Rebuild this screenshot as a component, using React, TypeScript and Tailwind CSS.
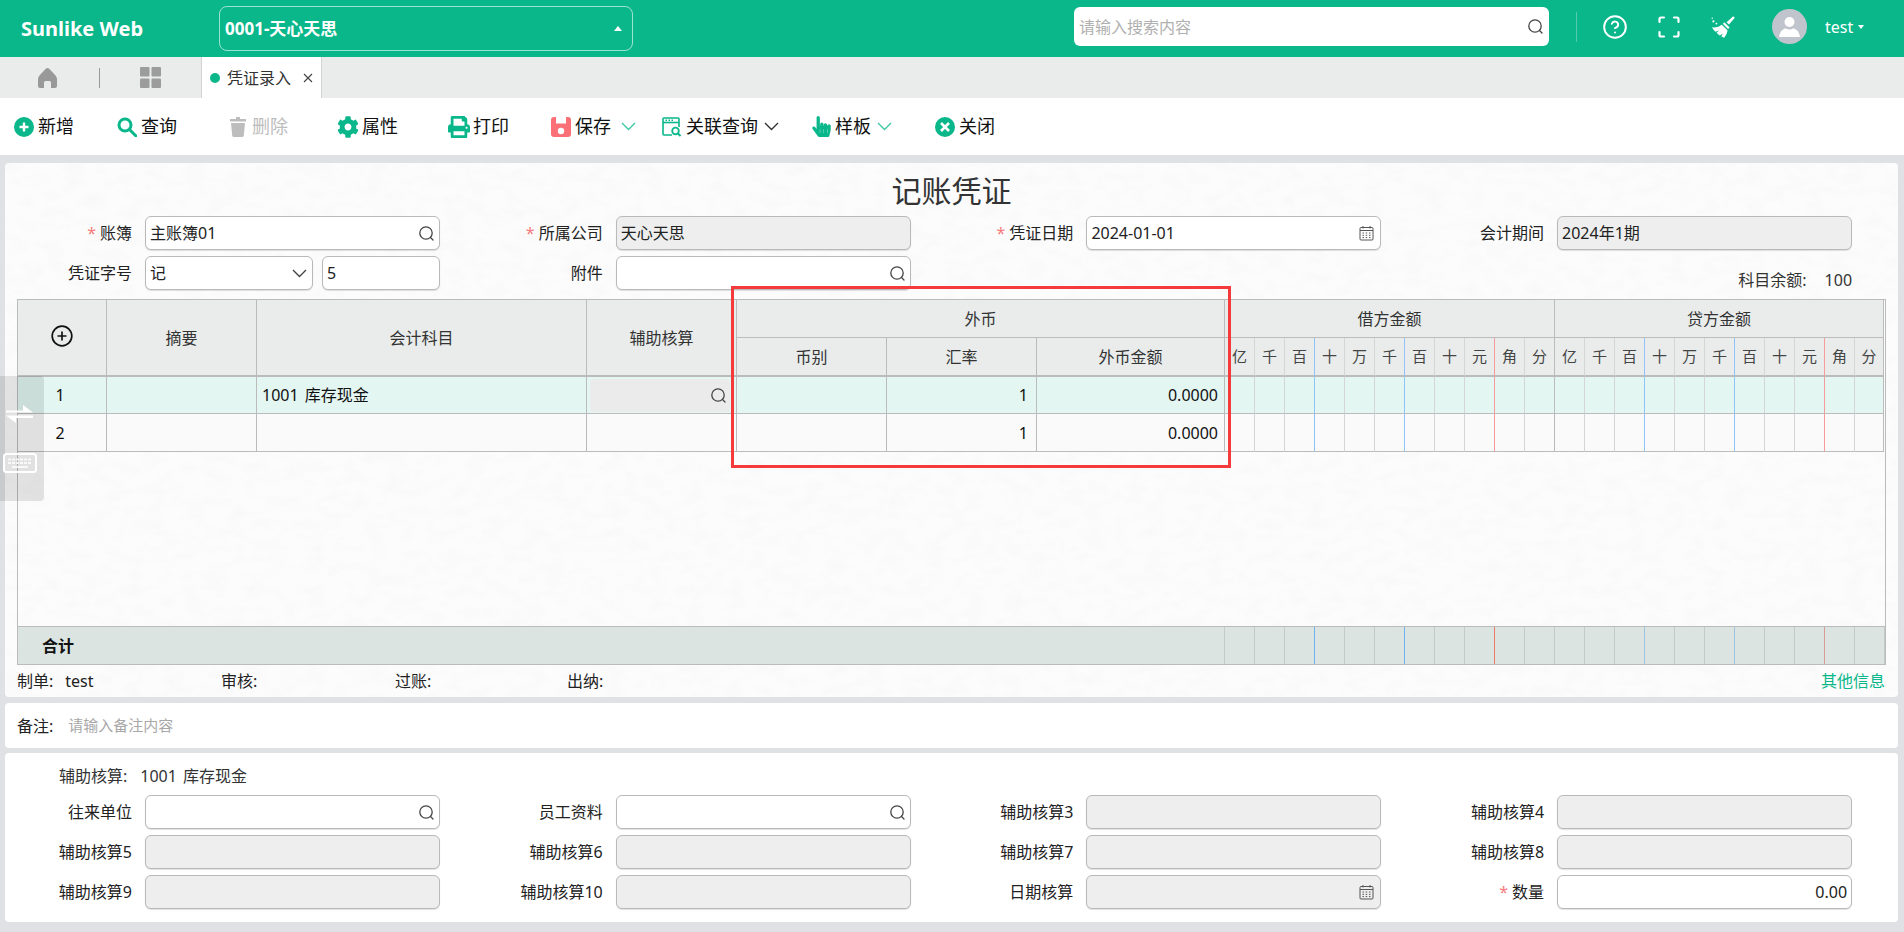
import { CircleHelp } from 'lucide-react'
import { FaCog, FaHandPointer, FaPrint } from 'react-icons/fa'
import type { ReactNode } from 'react'

const digits = ['亿', '千', '百', '十', '万', '千', '百', '十', '元', '角', '分']
const allDigits = [...digits, ...digits]

const digitLine = (i: number) => {
  const d = i % 11
  if (d === 2 || d === 5) return 'border-r-[#8fc4f7]'
  if (d === 8) return 'border-r-[#f79a9a]'
  if (i === 10 || i === 21) return 'border-r-[#bbbbbb]'
  return 'border-r-[#d5d5d5]'
}

const totalLine = (i: number) => {
  const d = i % 11
  if (d === 2 || d === 5) return i > 10 ? 'border-r-[#9cc4e0]' : 'border-r-[#6db4f0]'
  if (d === 8) return i > 10 ? 'border-r-[#d89c94]' : 'border-r-[#ef7a6a]'
  return 'border-r-[#c3cbc9]'
}

function SearchGlyph() {
  return (
    <svg width="17" height="17" viewBox="0 0 17 17" fill="none" stroke="#444" strokeWidth="1.3">
      <circle cx="8" cy="8" r="6.2" />
      <path d="M12.5 12.5L15 15" strokeLinecap="round" />
    </svg>
  )
}

function CalendarGlyph() {
  return (
    <svg className="mr-[2px]" width="15" height="16" viewBox="0 0 15 16" fill="none" stroke="#555" strokeWidth="1">
      <rect x="1" y="2.5" width="13" height="12.5" rx="1" />
      <path d="M1 5.5H14M4 1V3.5M11 1V3.5" />
      <path d="M3.5 8H5M6.7 8H8.2M10 8H11.5M3.5 10.3H5M6.7 10.3H8.2M10 10.3H11.5M3.5 12.6H5M6.7 12.6H8.2M10 12.6H11.5" />
    </svg>
  )
}

function Chevron({ color, className = '' }: { color: string; className?: string }) {
  return (
    <svg className={className} width="15" height="9" viewBox="0 0 15 9" fill="none" stroke={color} strokeWidth="1.4">
      <path d="M1 1L7.5 7.5L14 1" />
    </svg>
  )
}

function Box({ disabled, children, className = 'w-[295px]' }: { disabled?: boolean; children?: ReactNode; className?: string }) {
  return (
    <div
      className={`${className} h-[34px] flex items-center justify-between pl-1 pr-1 rounded-md border border-[#b9b9b9] shadow-[0_1px_1px_rgba(0,0,0,0.12)] ${disabled ? 'bg-[#edeeed]' : 'bg-white'}`}
    >
      {children}
    </div>
  )
}

function Field({ label, required, children }: { label: string; required?: boolean; children: ReactNode }) {
  return (
    <div className="flex items-center">
      <div className="w-[127px] mr-[13px] text-right text-[#222]">
        {required && <span className="text-[#f67c7c] mr-1">*</span>}
        {label}
      </div>
      {children}
    </div>
  )
}

function ToolItem({ icon, label, width, muted, chevron }: { icon: ReactNode; label: string; width: string; muted?: boolean; chevron?: ReactNode }) {
  return (
    <div className={`${width} flex items-center`}>
      <span className="w-5 h-5 mr-1 flex items-center justify-center">{icon}</span>
      <span className={`text-[18px] ${muted ? 'text-[#bdbdbd]' : 'text-[#111]'}`}>{label}</span>
      {chevron}
    </div>
  )
}

const th = 'border-r border-[#bbbbbb] font-normal text-[#333] text-center'

function App() {
  return (
    <div className="relative w-[1904px] h-[932px] overflow-hidden flex flex-col bg-[#dfe1e4] text-[16px] font-['Noto_Sans','Noto_Sans_CJK_SC',sans-serif]">
      <header className="h-[57px] shrink-0 bg-[#09b78a] flex items-center text-white">
        <div className="w-[219px] pl-[21px] text-[20px] font-bold">Sunlike Web</div>
        <div className="w-[414px] h-[45px] flex items-center justify-between pl-[5px] pr-[10px] rounded-lg border border-white/60 text-[17px] font-bold">
          0001-天心天思
          <span className="w-0 h-0 border-x-[4px] border-x-transparent border-b-[5px] border-b-white" />
        </div>
        <div className="flex items-center pb-[4px]">
          <div className="ml-[441px] w-[475px] h-[39px] flex items-center justify-between pl-[5px] pr-[5px] bg-white rounded-md">
            <span className="text-[#b0b0b0]">请输入搜索内容</span>
            <SearchGlyph />
          </div>
          <div className="ml-[27px] w-px h-[30px] bg-white/30" />
          <CircleHelp className="ml-[25px]" size={26} strokeWidth={1.8} />
          <svg className="ml-[30px]" width="22" height="22" viewBox="0 0 22 22" fill="none" stroke="white" strokeWidth="2.2" strokeLinecap="round">
            <path d="M1.5 6V3Q1.5 1.5 3 1.5H6M16 1.5H19Q20.5 1.5 20.5 3V6M20.5 16V19Q20.5 20.5 19 20.5H16M6 20.5H3Q1.5 20.5 1.5 19V16" />
          </svg>
          <svg className="ml-[31px]" width="24" height="22" viewBox="0 0 24 22" fill="white">
            <path d="M22.2 0.2L23.8 1.8L18 8.6L15.6 6.2Z" />
            <path d="M13.4 6.2L18.6 11.4L17 13L11.8 7.8Z" />
            <path d="M10.8 8.8L16.6 14.4Q16 18.4 13.2 21.8Q11.8 21.2 10.4 20.2L11.8 17.6L8.8 19.6Q7 18.2 5.6 16.8L8 14.6L4.4 15.8Q2.6 14 0.8 11.2Q6.8 12.2 10.8 8.8Z" />
            <circle cx="2.4" cy="5.4" r="1.1" />
            <circle cx="5.4" cy="7.6" r="0.9" />
            <circle cx="1.2" cy="2.2" r="0.7" />
          </svg>
          <span className="ml-[37px] w-[35px] h-[35px] rounded-full bg-[#c0c4cc] flex items-center justify-center">
            <svg width="21" height="22" viewBox="0 0 21 22" fill="white">
              <circle cx="10.5" cy="6" r="5" />
              <path d="M0 21Q1 14 6.5 12.2Q10.5 15 14.5 12.2Q20 14 21 21Z" />
            </svg>
          </span>
          <span className="ml-[18px]">test</span>
          <span className="ml-[5px] w-0 h-0 border-x-[3.5px] border-x-transparent border-t-[4px] border-t-white" />
        </div>
      </header>

      <div className="h-[41px] shrink-0 bg-[#e9eceb] flex items-center">
        <svg className="ml-[38px]" width="19" height="20" viewBox="0 0 19 20" fill="#999">
          <path d="M9.5 0Q10.5 0 11.5 1L17.5 7.5Q19 9 19 11V18Q19 20 17 20H13V14.5Q13 13 11.5 13H7.5Q6 13 6 14.5V20H2Q0 20 0 18V11Q0 9 1.5 7.5L7.5 1Q8.5 0 9.5 0Z" />
        </svg>
        <div className="ml-[42px] w-px h-[20px] bg-[#999]" />
        <svg className="ml-[40px]" width="21" height="21" viewBox="0 0 21 21" fill="#9c9c9c">
          <rect width="9.5" height="9.5" rx="1" />
          <rect x="11.5" width="9.5" height="9.5" rx="1" />
          <rect y="11.5" width="9.5" height="9.5" rx="1" />
          <rect x="11.5" y="11.5" width="9.5" height="9.5" rx="1" />
        </svg>
        <div className="ml-[40px] w-[121px] h-full bg-white border-x border-[#d0d3d2] flex items-center pl-[8px]">
          <span className="w-[10px] h-[10px] rounded-full bg-[#09b78a] mr-[7px]" />
          <span className="text-[#333]">凭证录入</span>
          <svg className="ml-[12px]" width="10" height="10" viewBox="0 0 10 10" fill="none" stroke="#444" strokeWidth="1.1">
            <path d="M1 1L9 9M9 1L1 9" />
          </svg>
        </div>
      </div>

      <div className="h-[57px] shrink-0 bg-white flex items-center pl-[14px]">
        <ToolItem
          width="w-[103px]"
          label="新增"
          icon={
            <svg width="20" height="20" viewBox="0 0 20 20">
              <circle cx="10" cy="10" r="10" fill="#09b78a" />
              <path d="M10 5.5V14.5M5.5 10H14.5" stroke="white" strokeWidth="2.4" />
            </svg>
          }
        />
        <ToolItem
          width="w-[111px]"
          label="查询"
          icon={
            <svg width="20" height="20" viewBox="0 0 20 20" fill="none" stroke="#09b78a" strokeWidth="3">
              <circle cx="8" cy="8" r="6" />
              <path d="M12.5 12.5L19 19" strokeLinecap="round" />
            </svg>
          }
        />
        <ToolItem
          width="w-[110px]"
          label="删除"
          muted
          icon={
            <svg width="16" height="20" viewBox="0 0 16 20" fill="#bdbdbd">
              <path d="M6 0H10V2H16V4.5H0V2H6Z" />
              <path d="M1 6H15L13.8 18.5Q13.6 20 12 20H4Q2.4 20 2.2 18.5Z" />
            </svg>
          }
        />
        <ToolItem width="w-[111px]" label="属性" icon={<FaCog className="shrink-0" size={22} color="#09b78a" />} />
        <ToolItem width="w-[102px]" label="打印" icon={<FaPrint className="shrink-0" size={22} color="#09b78a" />} />
        <ToolItem
          width="w-[111px]"
          label="保存"
          chevron={<Chevron className="ml-[10px]" color="#3fc9a6" />}
          icon={
            <svg width="20" height="20" viewBox="0 0 20 20">
              <rect width="20" height="20" rx="3" fill="#fb7077" />
              <rect x="5" y="0" width="10" height="6.5" fill="white" />
              <circle cx="10" cy="14" r="3.2" fill="white" />
            </svg>
          }
        />
        <ToolItem
          width="w-[149px]"
          label="关联查询"
          chevron={<Chevron className="ml-[6px]" color="#333" />}
          icon={
            <svg width="20" height="20" viewBox="0 0 20 20" fill="none" stroke="#09b78a" strokeWidth="1.6">
              <path d="M10 18H2Q1 18 1 17V2Q1 1 2 1H16Q17 1 17 2V10" />
              <path d="M1 5.5H17" />
              <path d="M3.5 3.2H5M6.5 3.2H8M9.5 3.2H11" />
              <circle cx="13.5" cy="14" r="3.3" strokeWidth="1.8" />
              <path d="M16 16.5L18.5 19" strokeWidth="2" />
            </svg>
          }
        />
        <ToolItem
          width="w-[124px]"
          label="样板"
          chevron={<Chevron className="ml-[6px]" color="#3fc9a6" />}
          icon={<FaHandPointer className="shrink-0" size={21} color="#09b78a" />}
        />
        <ToolItem
          width="w-[80px]"
          label="关闭"
          icon={
            <svg width="20" height="20" viewBox="0 0 20 20">
              <circle cx="10" cy="10" r="10" fill="#09b78a" />
              <path d="M6 6L14 14M14 6L6 14" stroke="white" strokeWidth="2.6" />
            </svg>
          }
        />
      </div>

      <main className="flex-1 flex flex-col pl-[5px] pr-[6px] pt-2 text-[#222]">
        <section className="relative h-[534px] rounded-[4px] bg-[#fcfcfc] overflow-hidden">
          <svg className="absolute inset-0 w-full h-full pointer-events-none" aria-hidden="true">
            <filter id="paper">
              <feTurbulence type="fractalNoise" baseFrequency="0.05 0.09" numOctaves="3" seed="4" />
              <feColorMatrix values="0 0 0 0 0.5  0 0 0 0 0.5  0 0 0 0 0.5  0.5 0 0 0 -0.2" />
            </filter>
            <rect width="100%" height="100%" filter="url(#paper)" opacity="0.22" />
          </svg>
          <div className="relative">
            <h1 className="h-[53px] flex items-center justify-center pt-[1px] text-[30px] font-normal text-[#333]">记账凭证</h1>
            <div className="grid grid-cols-[repeat(4,470.7px)] gap-y-[6px]">
              <Field label="账簿" required>
                <Box>
                  主账簿01
                  <SearchGlyph />
                </Box>
              </Field>
              <Field label="所属公司" required>
                <Box disabled>天心天思</Box>
              </Field>
              <Field label="凭证日期" required>
                <Box>
                  2024-01-01
                  <CalendarGlyph />
                </Box>
              </Field>
              <Field label="会计期间">
                <Box disabled>2024年1期</Box>
              </Field>
              <Field label="凭证字号">
                <Box className="w-[168px]">
                  记
                  <Chevron className="mr-[1px]" color="#444" />
                </Box>
                <div className="ml-[9px]">
                  <Box className="w-[118px]">5</Box>
                </div>
              </Field>
              <Field label="附件">
                <Box>
                  <span />
                  <SearchGlyph />
                </Box>
              </Field>
              <div />
              <div className="w-[435px] h-[34px] flex items-end justify-end">
                <span className="leading-5 text-[#333]">
                  科目余额:<span className="ml-[18px]">100</span>
                </span>
              </div>
            </div>

            <div className="mt-[9px] ml-[12px] w-[1869px] h-[366px] flex flex-col border border-[#bbbbbb]">
              <table className="w-[1866px] table-fixed border-separate border-spacing-0">
                <colgroup>
                  <col className="w-[89px]" />
                  <col className="w-[150px]" />
                  <col className="w-[330px]" />
                  <col className="w-[150px]" />
                  <col className="w-[150px]" />
                  <col className="w-[150px]" />
                  <col className="w-[188px]" />
                  {allDigits.map((_, i) => (
                    <col key={i} className={i === 21 ? 'w-[29px]' : 'w-[30px]'} />
                  ))}
                </colgroup>
                <thead className="bg-[#e9eceb]">
                  <tr className="h-[38px]">
                    <th rowSpan={2} className={`${th} border-b-2`}>
                      <svg className="mx-auto -mt-1" width="22" height="22" viewBox="0 0 22 22" fill="none" stroke="#111" strokeWidth="1.7">
                        <circle cx="11" cy="11" r="9.8" />
                        <path d="M11 6.5V15.5M6.5 11H15.5" />
                      </svg>
                    </th>
                    <th rowSpan={2} className={`${th} border-b-2`}>摘要</th>
                    <th rowSpan={2} className={`${th} border-b-2`}>会计科目</th>
                    <th rowSpan={2} className={`${th} border-b-2`}>辅助核算</th>
                    <th colSpan={3} className={`${th} border-b`}>外币</th>
                    <th colSpan={11} className={`${th} border-b`}>借方金额</th>
                    <th colSpan={11} className={`${th} border-b`}>贷方金额</th>
                  </tr>
                  <tr className="h-[39px]">
                    <th className={`${th} border-b-2 border-b-[#bbbbbb]`}>币别</th>
                    <th className={`${th} border-b-2 border-b-[#bbbbbb]`}>汇率</th>
                    <th className={`${th} border-b-2 border-b-[#bbbbbb]`}>外币金额</th>
                    {allDigits.map((d, i) => (
                      <th key={i} className={`border-r border-b-2 border-b-[#bbbbbb] font-normal text-[15px] text-[#444] text-center ${digitLine(i)}`}>
                        {d}
                      </th>
                    ))}
                  </tr>
                </thead>
                <tbody>
                  {[1, 2].map(n => (
                    <tr key={n} className={n === 1 ? 'h-[37px] bg-[#e3f6f2]' : 'h-[38px] bg-[#fafafa]'}>
                      <td className="border-r border-b border-[#bbbbbb] text-center pr-1 text-[#111]">{n}</td>
                      <td className="border-r border-b border-[#bbbbbb]" />
                      <td className="border-r border-b border-[#bbbbbb] pl-[5px] text-[#111] [word-spacing:2px]">{n === 1 && '1001 库存现金'}</td>
                      <td className="border-r border-b border-[#bbbbbb] pl-[3px] pr-[6px]">
                        {n === 1 && (
                          <div className="h-[33px] flex items-center justify-end pr-[3px] rounded bg-[#ebebeb]">
                            <SearchGlyph />
                          </div>
                        )}
                      </td>
                      <td className="border-r border-b border-[#bbbbbb]" />
                      <td className="border-r border-b border-[#bbbbbb] text-right pr-2 text-[#111]">1</td>
                      <td className="border-r border-b border-[#bbbbbb] text-right pr-[6px] text-[#111]">0.0000</td>
                      {allDigits.map((_, i) => (
                        <td key={i} className={`border-r border-b border-b-[#bbbbbb] ${digitLine(i)}`} />
                      ))}
                    </tr>
                  ))}
                </tbody>
              </table>

              <div className="mt-auto h-[38px] flex border-t border-[#bbbbbb] bg-[#dce4e2]">
                <div className="w-[1207px] pl-[24px] flex items-center border-r border-[#c3cbc9] font-bold text-[#111]">合计</div>
                {allDigits.map((_, i) => (
                  <div key={i} className={`w-[30px] border-r ${totalLine(i)}`} />
                ))}
              </div>
            </div>

            <div className="h-[32px] flex items-center pl-[12px] pr-[13px]">
              <span className="w-[204px]">
                制单:<span className="ml-3">test</span>
              </span>
              <span className="w-[174px]">审核:</span>
              <span className="w-[172px]">过账:</span>
              <span>出纳:</span>
              <span className="ml-auto text-[#09b78a]">其他信息</span>
            </div>
          </div>
        </section>

        <section className="mt-[6px] h-[45px] shrink-0 rounded-[4px] bg-white flex items-center pl-[12px]">
          备注:
          <span className="ml-[15px] text-[15px] text-[#a8a8a8]">请输入备注内容</span>
        </section>

        <section className="mt-[5px] h-[169px] shrink-0 rounded-[4px] bg-white pt-[13px]">
          <div className="h-[20px] leading-5 pl-[54px] text-[#333]">
            辅助核算:<span className="ml-[13px] [word-spacing:2px]">1001 库存现金</span>
          </div>
          <div className="mt-[9px] grid grid-cols-[repeat(4,470.7px)] gap-y-[6px]">
            <Field label="往来单位">
              <Box>
                <span />
                <SearchGlyph />
              </Box>
            </Field>
            <Field label="员工资料">
              <Box>
                <span />
                <SearchGlyph />
              </Box>
            </Field>
            <Field label="辅助核算3">
              <Box disabled />
            </Field>
            <Field label="辅助核算4">
              <Box disabled />
            </Field>
            <Field label="辅助核算5">
              <Box disabled />
            </Field>
            <Field label="辅助核算6">
              <Box disabled />
            </Field>
            <Field label="辅助核算7">
              <Box disabled />
            </Field>
            <Field label="辅助核算8">
              <Box disabled />
            </Field>
            <Field label="辅助核算9">
              <Box disabled />
            </Field>
            <Field label="辅助核算10">
              <Box disabled />
            </Field>
            <Field label="日期核算">
              <Box disabled>
                <span />
                <CalendarGlyph />
              </Box>
            </Field>
            <Field label="数量" required>
              <Box>
                <span />
                0.00
              </Box>
            </Field>
          </div>
        </section>
      </main>

      {/* floating side handle */}
      <div className="absolute left-0 top-[376px] w-[44px] h-[125px] rounded-r bg-black/10 flex flex-col items-center pr-[5px]">
        <svg className="mt-[29px]" width="27" height="18" viewBox="0 0 27 18" fill="white">
          <path d="M0 5.5H17V0L27 7.5H0Z" />
          <path d="M27 10.5H0L10 18V13H27Z" />
        </svg>
        <svg className="mt-[30px]" width="34" height="20" viewBox="0 0 34 20" fill="none" stroke="white">
          <rect x="1" y="1" width="32" height="18" rx="2.5" strokeWidth="2" />
          <path d="M5 6.5H29M5 10H29" strokeWidth="2" strokeDasharray="3 1" opacity="0.8" />
          <path d="M9 14H25" strokeWidth="2" opacity="0.8" />
        </svg>
      </div>

      {/* red annotation box */}
      <div className="absolute left-[731px] top-[286px] w-[500px] h-[182px] border-[3px] border-[#f53a3c] pointer-events-none" />
    </div>
  )
}

export default App
